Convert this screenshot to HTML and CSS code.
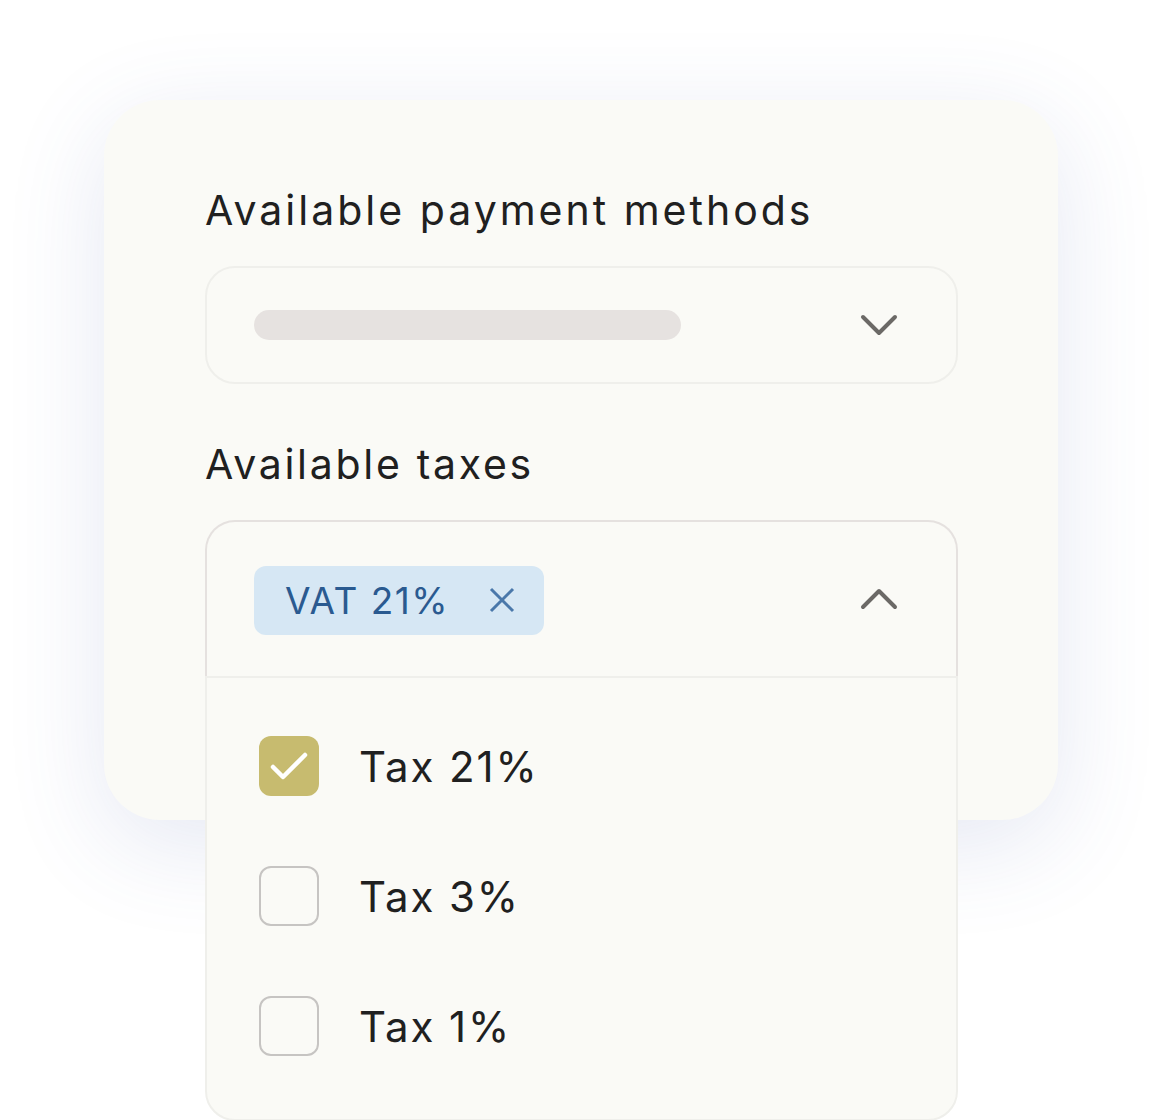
FILE: index.html
```html
<!DOCTYPE html>
<html lang="en">
<head>
<meta charset="utf-8">
<title>Taxes</title>
<link rel="stylesheet" href="styles.css">
</head>
<body>
<div class="stage">
  <div class="card">
    <div class="label label-first">Available payment methods</div>
    <div class="field">
      <div class="skeleton"></div>
      <svg class="chevron" width="38" height="22" viewBox="0 0 38 22"><polyline points="3,3 19,19 35,3" fill="none" stroke="#6b6966" stroke-width="4" stroke-linecap="round" stroke-linejoin="round"/></svg>
    </div>
    <div class="label label-second">Available taxes</div>
    <div class="select">
      <div class="select-head">
        <div class="chip">
          <span class="chip-text">VAT 21%</span>
          <svg class="chip-x" width="26" height="26" viewBox="0 0 26 26"><path d="M2 2 L24 24 M24 2 L2 24" fill="none" stroke="#4a78aa" stroke-width="3"/></svg>
        </div>
        <svg class="chevron" width="38" height="22" viewBox="0 0 38 22"><polyline points="3,19 19,3 35,19" fill="none" stroke="#6b6966" stroke-width="4" stroke-linecap="round" stroke-linejoin="round"/></svg>
      </div>
      <div class="panel">
        <div class="option">
          <span class="box box-checked"><svg width="60" height="60" viewBox="0 0 60 60"><polyline points="14,31 24,41 46,19" fill="none" stroke="#ffffff" stroke-width="4.5" stroke-linecap="round" stroke-linejoin="round"/></svg></span>
          <span class="option-text">Tax 21%</span>
        </div>
        <div class="option">
          <span class="box"></span>
          <span class="option-text">Tax 3%</span>
        </div>
        <div class="option">
          <span class="box"></span>
          <span class="option-text">Tax 1%</span>
        </div>
      </div>
    </div>
  </div>
</div>
</body>
</html>
```

FILE: styles.css
```css
html, body {
  margin: 0;
  padding: 0;
  background: #ffffff;
}
body {
  width: 1156px;
  height: 1120px;
  overflow: hidden;
  font-family: "Inter", "Lato", sans-serif;
  color: #222222;
}
.stage {
  padding: 100px 0 0 104px;
}
.card {
  width: 954px;
  height: 720px;
  box-sizing: border-box;
  background: #fafaf6;
  border-radius: 56px;
  padding: 0 100px 0 101px;
  box-shadow: 0 24px 100px rgba(70, 90, 170, 0.14);
  display: flex;
  flex-direction: column;
}
.label {
  font-size: 41px;
  line-height: 48px;
  letter-spacing: 3px;
  color: #202020;
  font-weight: 400;
  flex: none;
}
.label-first {
  margin-top: 86px;
  margin-bottom: 32px;
}
.label-second {
  margin-top: 56px;
  margin-bottom: 32px;
  letter-spacing: 2.7px;
}
.field {
  flex: none;
  height: 118px;
  box-sizing: border-box;
  border: 2px solid #efefeb;
  border-radius: 30px;
  display: flex;
  align-items: center;
  justify-content: space-between;
  padding: 0 60px 0 47px;
}
.skeleton {
  width: 427px;
  height: 30px;
  border-radius: 15px;
  background: #e6e2e0;
}
.chevron {
  display: block;
  margin-right: -2px;
}
.select {
  flex: none;
  display: flex;
  flex-direction: column;
}
.select-head {
  height: 156px;
  box-sizing: border-box;
  border: 2px solid #e5e1df;
  border-bottom: none;
  border-radius: 30px 30px 0 0;
  display: flex;
  align-items: center;
  justify-content: space-between;
  padding: 0 60px 0 47px;
  background: #fafaf6;
}
.chip {
  height: 69px;
  box-sizing: border-box;
  background: #d6e7f4;
  border-radius: 12px;
  display: flex;
  align-items: center;
  padding: 0 29px 0 31px;
  gap: 40px;
  margin-top: 2px;
}
.chip-text {
  font-size: 37px;
  letter-spacing: 1.5px;
  color: #2a5a90;
}
.chip-x {
  display: block;
  width: 26px;
  height: 26px;
}
.panel {
  border: 2px solid #efefeb;
  border-radius: 0 0 30px 30px;
  background: #fafaf6;
  padding: 23px 0 28px 52px;
  display: flex;
  flex-direction: column;
}
.option {
  height: 130px;
  display: flex;
  align-items: center;
  gap: 40px;
}
.box {
  width: 60px;
  height: 60px;
  box-sizing: border-box;
  border: 2px solid #c6c4c2;
  border-radius: 12px;
  display: block;
  flex: none;
}
.box-checked {
  border: none;
  background: #c7bb6f;
}
.box svg {
  display: block;
}
.option-text {
  font-size: 42px;
  letter-spacing: 1.9px;
  color: #202020;
}
```
